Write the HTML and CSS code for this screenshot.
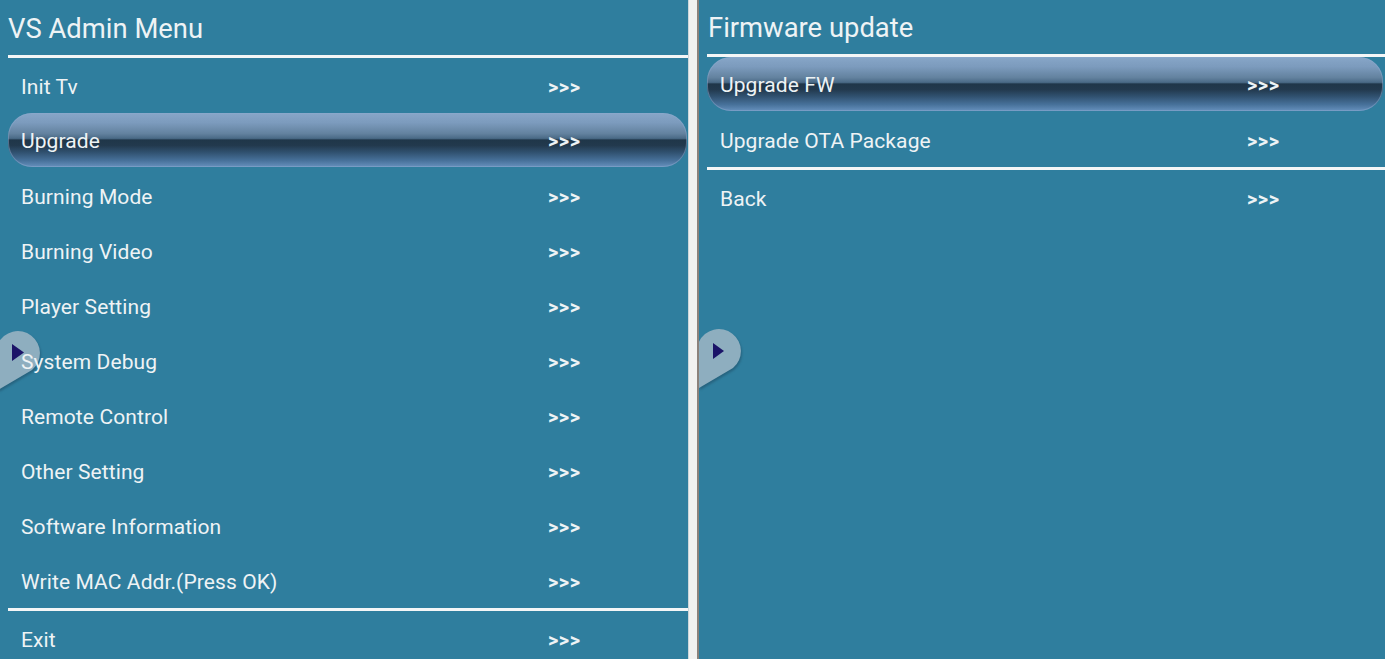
FILE: index.html
```html
<!DOCTYPE html>
<html>
<head>
<meta charset="utf-8">
<link rel="stylesheet" href="styles.css">
</head>
<body>
<div class="screen">
  <section class="panel panel-left">
    <h1 class="title title-left">VS Admin Menu</h1>
    <div class="rule"></div>
    <ul class="menu">
      <li class="row"><span class="label">Init Tv</span><span class="more">&gt;&gt;&gt;</span></li>
      <li class="row selected"><span class="label">Upgrade</span><span class="more">&gt;&gt;&gt;</span></li>
      <li class="row"><span class="label">Burning Mode</span><span class="more">&gt;&gt;&gt;</span></li>
      <li class="row"><span class="label">Burning Video</span><span class="more">&gt;&gt;&gt;</span></li>
      <li class="row"><span class="label">Player Setting</span><span class="more">&gt;&gt;&gt;</span></li>
      <li class="row"><span class="label">System Debug</span><span class="more">&gt;&gt;&gt;</span></li>
      <li class="row"><span class="label">Remote Control</span><span class="more">&gt;&gt;&gt;</span></li>
      <li class="row"><span class="label">Other Setting</span><span class="more">&gt;&gt;&gt;</span></li>
      <li class="row"><span class="label">Software Information</span><span class="more">&gt;&gt;&gt;</span></li>
      <li class="row"><span class="label">Write MAC Addr.(Press OK)</span><span class="more">&gt;&gt;&gt;</span></li>
    </ul>
    <div class="rule"></div>
    <ul class="menu">
      <li class="row"><span class="label">Exit</span><span class="more">&gt;&gt;&gt;</span></li>
    </ul>
    <svg class="pin pin-left" width="44" height="62" viewBox="0 0 44 62">
      <path d="M0 13.8 A22 22 0 1 1 34 40 L0 60 Z" class="pin-body"/>
      <path d="M14 14 L26 22.5 L14 31 Z" class="pin-arrow"/>
    </svg>
  </section>
  <div class="divider"></div>
  <section class="panel panel-right">
    <h1 class="title title-right">Firmware update</h1>
    <div class="rule"></div>
    <ul class="menu">
      <li class="row selected"><span class="label">Upgrade FW</span><span class="more">&gt;&gt;&gt;</span></li>
      <li class="row"><span class="label">Upgrade OTA Package</span><span class="more">&gt;&gt;&gt;</span></li>
    </ul>
    <div class="rule"></div>
    <ul class="menu">
      <li class="row"><span class="label">Back</span><span class="more">&gt;&gt;&gt;</span></li>
    </ul>
    <svg class="pin pin-right" width="44" height="62" viewBox="0 0 44 62">
      <path d="M0 13.8 A22 22 0 1 1 34 40 L0 60 Z" class="pin-body"/>
      <path d="M14 15 L25 23 L14 31 Z" class="pin-arrow"/>
    </svg>
  </section>
</div>
</body>
</html>
```

FILE: styles.css
```css
* { box-sizing: border-box; }

html, body {
  margin: 0;
  padding: 0;
  width: 1385px;
  height: 659px;
  overflow: hidden;
  background: #2f7e9e;
}

.screen {
  display: flex;
  width: 1385px;
  height: 659px;
  font-family: Roboto, "Noto Sans", "Liberation Sans", sans-serif;
  color: #eef3f5;
}

.panel {
  position: relative;
  background: #2f7e9e;
  overflow: hidden;
}

.panel-left {
  width: 688px;
  padding-left: 8px;
}

.panel-right {
  flex: 1;
  padding-left: 8px;
}

.divider {
  width: 11px;
  background: #f1f1f0;
  border-left: 1px solid #cdd6da;
  border-right: 2px solid #8b817b;
}

.title {
  margin: 0;
  font-weight: 400;
  font-size: 27.4px;
  line-height: 1;
  display: flex;
  align-items: center;
}

.title-left { height: 55px; padding-top: 5px; }
.title-right { height: 54px; padding-top: 4px; padding-left: 1px; }

.rule {
  height: 3px;
  background: #f4f6f7;
}

.menu {
  list-style: none;
  margin: 0;
  padding: 0;
}

.row {
  position: relative;
  display: flex;
  align-items: center;
  height: 55px;
  padding-left: 13px;
  padding-top: 2px;
  font-size: 21px;
  letter-spacing: 0.1px;
}

.label {
  position: relative;
  z-index: 2;
  width: 527px;
  flex: none;
}

.more {
  position: relative;
  z-index: 2;
  font-size: 20px;
  font-weight: 700;
  letter-spacing: 0.5px;
}

.selected {
  border-radius: 24px;
  height: 54px;
  margin-bottom: 1px;
  background: linear-gradient(to bottom,
    #87a6c8 0%,
    #7c9bbd 18%,
    #63829f 38%,
    #4a6a86 47%,
    #1f3649 50%,
    #22394d 60%,
    #2f4f6d 72%,
    #47719a 88%,
    #6690bd 100%);
  box-shadow: inset 0 0 0 1px rgba(140, 170, 205, 0.5);
}

.panel-left .selected { margin-right: 1px; }
.panel-right .selected { margin-right: 2px; }

.pin {
  position: absolute;
  z-index: 1;
  overflow: visible;
  filter: drop-shadow(1px 2px 1px rgba(20, 50, 70, 0.35));
}

.pin-left { left: -2px; top: 330px; }
.pin-right { left: 0; top: 328px; }

.pin-body { fill: #8eaebf; }
.pin-arrow { fill: #1b1468; }
```
